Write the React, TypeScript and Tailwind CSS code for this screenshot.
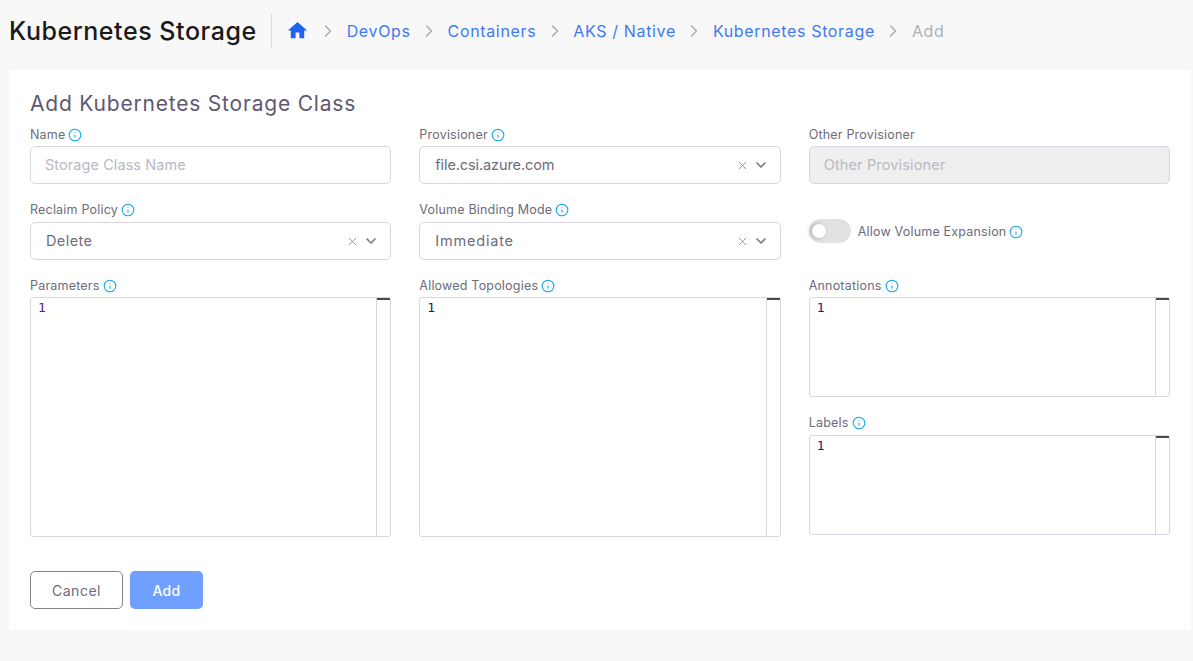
import React from "react";
import { Info, ChevronRight, ChevronDown, X } from "lucide-react";

const Etiqueta = ({ texto, info = true, className = "" }: { texto: string; info?: boolean; className?: string }) => (
  <div className={`flex items-center gap-[3px] h-5 pt-[2px] text-[12.5px] tracking-[0.2px] text-[#6e6b7b] ${className}`}>
    <span>{texto}</span>
    {info && <Info size={14} strokeWidth={1.8} className="text-[#0ea5e9]" />}
  </div>
);

const Selector = ({ valor, ajuste = "" }: { valor: string; ajuste?: string }) => (
  <div className="h-[38px] border border-[#d8d6de] rounded-[5px] flex items-center pl-[15px] pr-[11px] text-[14.5px] text-[#6e6b7b] bg-white">
    <span className={`flex-1 ${ajuste}`}>{valor}</span>
    <X size={13} strokeWidth={1.6} className="text-[#8a8894] mr-[4px]" />
    <ChevronDown size={16} strokeWidth={2.6} className="text-[#7d7b87]" />
  </div>
);

const Editor = ({ className = "", numero = "text-[#1a1a6e]" }: { className?: string; numero?: string }) => (
  <div className={`border border-[#d8d6de] rounded-[3px] bg-[#fffffe] flex ${className}`}>
    <div className={`flex-1 pl-[7px] pt-[1px] text-[13px] leading-[18px] ${numero}`} style={{ fontFamily: '"DejaVu Sans Mono", monospace' }}>
      1
    </div>
    <div className="w-[14px] border-l border-[#d8d6de]">
      <div className="h-[2px] bg-[#4a4a4a]" />
    </div>
  </div>
);

const migas = ["DevOps", "Containers", "AKS / Native", "Kubernetes Storage"];

const Separador = () => <ChevronRight size={20} strokeWidth={1.7} className="text-[#a9a9b0] mx-[8.5px]" />;

export default function App() {
  return (
    <div className="min-h-[661px] bg-[#f8f8f8] pl-[9px] pr-[2px] overflow-hidden" style={{ fontFamily: "Inter, sans-serif" }}>
      <header className="h-[70px] flex items-center pb-[8px]">
        <h1 className="text-[25px] font-medium tracking-[0.55px] text-[#1a1a1a] leading-none whitespace-nowrap pr-[14px] border-r border-[#d8d8d8] h-[34px] flex items-center">
          Kubernetes Storage
        </h1>
        <nav className="flex items-center text-[16px] tracking-[0.65px] text-[#3f78f5] pl-[14px] pb-[1px]">
          <svg width="23" height="23" viewBox="0 0 24 24" fill="#1f62f2" className="mr-[1px]">
            <path d="M10 20v-6h4v6h5v-8h3L12 3 2 12h3v8z" />
          </svg>
          {migas.map((miga) => (
            <React.Fragment key={miga}>
              <Separador />
              <span className="whitespace-nowrap">{miga}</span>
            </React.Fragment>
          ))}
          <Separador />
          <span className="text-[#b0afb6]">Add</span>
        </nav>
      </header>

      <main className="bg-white h-[560px] px-[21px] pt-[19px]">
        <h2 className="text-[21px] leading-[30px] tracking-[0.8px] text-[#5e5873] mb-[5px]">Add Kubernetes Storage Class</h2>

        <div className="grid grid-cols-3 gap-x-[28px]">
          <div className="mb-[15px]">
            <Etiqueta texto="Name" className="mb-[2px]" />
            <div className="h-[38px] border border-[#d8d6de] rounded-[5px] flex items-center pl-[14px] text-[14.5px] tracking-[0.07px] text-[#b9b9c3] bg-white">
              Storage Class Name
            </div>
          </div>
          <div className="mb-[15px]">
            <Etiqueta texto="Provisioner" className="mb-[2px]" />
            <Selector valor="file.csi.azure.com" ajuste="tracking-[-0.1px]" />
          </div>
          <div className="mb-[15px]">
            <Etiqueta texto="Other Provisioner" info={false} className="mb-[2px]" />
            <div className="h-[38px] border border-[#d8d6de] rounded-[5px] flex items-center pl-[14px] text-[14.5px] tracking-[0.15px] text-[#b9b9c3] bg-[#efefef]">
              Other Provisioner
            </div>
          </div>

          <div className="mb-[15px]">
            <Etiqueta texto="Reclaim Policy" className="mb-[3px]" />
            <Selector valor="Delete" ajuste="tracking-[0.4px]" />
          </div>
          <div className="mb-[15px]">
            <Etiqueta texto="Volume Binding Mode" className="mb-[3px]" />
            <Selector valor="Immediate" ajuste="tracking-[0.8px]" />
          </div>
          <div className="mb-[15px] flex items-center pt-[3px]">
            <div className="w-[42px] h-[24px] rounded-full bg-[#e2e2e2] flex items-center pl-[3px]">
              <div className="w-[14px] h-[14px] rounded-full bg-white shadow-[-2px_0_5px_rgba(0,0,0,0.25)]" />
            </div>
            <Etiqueta texto="Allow Volume Expansion" className="ml-[7px]" />
          </div>

          <div>
            <Etiqueta texto="Parameters" className="mb-[2px]" />
            <Editor className="h-[240px]" numero="text-[#5a1a8c]" />
          </div>
          <div>
            <Etiqueta texto="Allowed Topologies" className="mb-[2px]" />
            <Editor className="h-[240px]" />
          </div>
          <div>
            <Etiqueta texto="Annotations" className="mb-[2px]" />
            <Editor className="h-[100px] mb-[15px]" />
            <Etiqueta texto="Labels" className="mb-[3px]" />
            <Editor className="h-[100px]" />
          </div>
        </div>

        <div className="flex gap-[7px] mt-[34px]">
          <button className="w-[93px] h-[38px] border border-[#82868b] rounded-[5px] text-[14px] tracking-[0.5px] text-[#6e6b7b] bg-white">Cancel</button>
          <button className="w-[73px] h-[38px] rounded-[5px] text-[14px] font-medium tracking-[0.3px] text-white bg-[#6f9fff]">Add</button>
        </div>
      </main>
    </div>
  );
}
